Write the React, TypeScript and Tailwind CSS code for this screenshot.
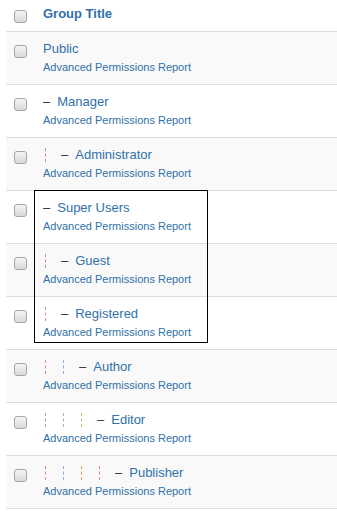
import React from "react"

const groups = [
    { title: "Public", level: 0 },
    { title: "Manager", level: 1 },
    { title: "Administrator", level: 2 },
    { title: "Super Users", level: 1 },
    { title: "Guest", level: 2 },
    { title: "Registered", level: 2 },
    { title: "Author", level: 3 },
    { title: "Editor", level: 4 },
    { title: "Publisher", level: 5 },
]

// one colour per indent guide
const guideColors = ["border-[#d98a95]", "border-[#8fb0df]", "border-[#dba25f]", "border-[#d98a95]"]

function Checkbox() {
    return (
        <span className="block w-[13px] h-[13px] rounded-[3px] border border-[#a6a6a6] bg-gradient-to-b from-[#f5f5f5] to-[#d9d9d9]" />
    )
}

export default function App() {
    return (
        <div className="relative w-[337px] h-[517px] bg-white pl-[6px] overflow-hidden" style={{ fontFamily: '"Liberation Sans", Arial, sans-serif' }}>
            {/* header */}
            <div className="flex h-[31px]">
                <div className="w-[37px] pl-[8px] pt-[10px]"><Checkbox /></div>
                <div className="pt-[6px] text-[13px] leading-[16px] font-bold text-[#3071a9]">Group Title</div>
            </div>

            {groups.map((g, i) => (
                <div key={g.title} className={`flex h-[53px] border-t border-[#dddddd] ${i % 2 === 0 ? "bg-[#f9f9f9]" : "bg-white"}`}>
                    <div className="w-[37px] pl-[8px] pt-[13px]"><Checkbox /></div>
                    <div className="flex flex-col pt-[8px]">
                        <div className="flex items-center h-[18px] text-[13px] text-[#3071a9]">
                            {Array.from({ length: Math.max(g.level - 1, 0) }).map((_, j) => (
                                <span key={j} className="w-[18px] h-[14px] flex">
                                    <span className={`ml-[2px] h-[14px] border-l border-dashed ${guideColors[j % 4]}`} />
                                </span>
                            ))}
                            {g.level > 0 && <span className="mr-[7px] text-[#333]">–</span>}
                            <span>{g.title}</span>
                        </div>
                        <div className="text-[11px] leading-[18px] text-[#3071a9]">Advanced Permissions Report</div>
                    </div>
                </div>
            ))}
            <div className="border-t border-[#dddddd]" />

            {/* highlight box */}
            <div className="absolute left-[34px] top-[190px] w-[174px] h-[153px] border border-black pointer-events-none" />
        </div>
    )
}
